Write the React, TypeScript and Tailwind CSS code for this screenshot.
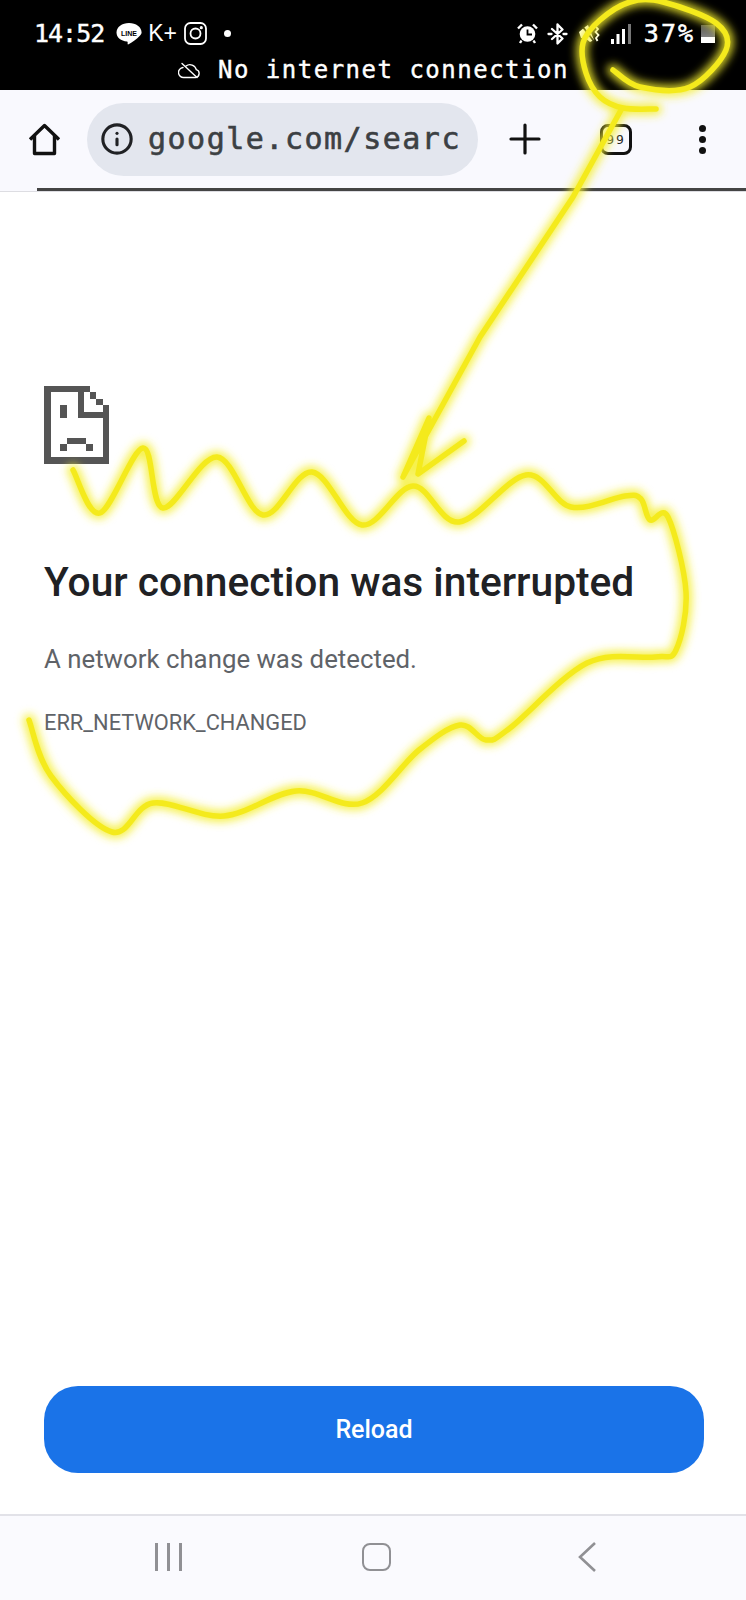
import { Info, Plus } from 'lucide-react';

type Pt = [number, number];

// smooth line through the marker points
function smooth(pts: Pt[]) {
  let d = `M${pts[0][0]} ${pts[0][1]}`;
  for (let i = 0; i < pts.length - 1; i++) {
    const p0 = pts[Math.max(i - 1, 0)];
    const p1 = pts[i];
    const p2 = pts[i + 1];
    const p3 = pts[Math.min(i + 2, pts.length - 1)];
    const c1x = p1[0] + (p2[0] - p0[0]) / 6;
    const c1y = p1[1] + (p2[1] - p0[1]) / 6;
    const c2x = p2[0] - (p3[0] - p1[0]) / 6;
    const c2y = p2[1] - (p3[1] - p1[1]) / 6;
    d += ` C${c1x} ${c1y} ${c2x} ${c2y} ${p2[0]} ${p2[1]}`;
  }
  return d;
}

const wave: Pt[] = [
  [73, 470], [100, 513], [143, 448], [163, 508], [217, 457], [263, 515], [312, 472], [362, 525],
  [413, 486], [459, 522], [526, 475], [571, 507], [625, 496], [641, 499], [650, 520], [668, 517],
  [686, 592], [676, 650], [655, 657], [587, 663], [510, 728], [486, 740], [460, 725], [419, 750],
  [362, 803], [296, 791], [224, 816], [153, 803], [112, 832], [51, 776], [29, 720],
];

const circle: Pt[] = [
  [613, 70], [640, 87], [690, 87], [726, 50], [716, 23], [663, 2], [630, 2], [600, 20],
  [583, 43], [586, 73], [600, 97], [623, 108], [656, 109],
];

const arrow = 'M621 110 L573 197 L480 337 L403 477 L429 418 L418 474 L464 441';

function Marker() {
  const paths = [smooth(wave), smooth(circle), arrow];
  return (
    <svg className="absolute left-0 top-0 pointer-events-none" width="746" height="1600" viewBox="0 0 746 1600" fill="none">
      <defs>
        <filter id="glow" x="-10%" y="-10%" width="120%" height="120%">
          <feGaussianBlur stdDeviation="4" />
        </filter>
      </defs>
      <g filter="url(#glow)" stroke="#f5ee30" strokeOpacity="0.85" strokeWidth="12" strokeLinecap="round" strokeLinejoin="round">
        {paths.map((d, i) => <path key={i} d={d} />)}
      </g>
      <g stroke="#f4ea1c" strokeWidth="5.500" strokeLinecap="round" strokeLinejoin="round">
        {paths.map((d, i) => <path key={i} d={d} />)}
      </g>
    </svg>
  );
}

function LineIcon() {
  return (
    <svg width="26" height="24" viewBox="0 0 26 24" className="ml-[12px]">
      <path d="M13 1C6 1 0.500 5 0.500 10.500c0 5 4.500 8.500 10.500 9 .8.2.8 1 .6 2-.1.8.3 1.200 1 .8 3-1.800 8-4.800 11-8.300 1.500-1.500 2-2.500 2-3.500C25.500 5 20 1 13 1z" fill="#fff" />
      <text x="13" y="13.500" textAnchor="middle" fontSize="7" fontWeight="700" fontFamily="Liberation Sans, sans-serif" fill="#000">LINE</text>
    </svg>
  );
}

function InstaIcon() {
  return (
    <svg width="23" height="23" viewBox="0 0 23 23" fill="none" stroke="#fff" strokeWidth="1.800" className="ml-[7px]">
      <rect x="1" y="1" width="21" height="21" rx="5.500" />
      <circle cx="11.500" cy="11.500" r="5" />
      <circle cx="17.300" cy="5.700" r="0.700" fill="#fff" />
    </svg>
  );
}

function CloudOff() {
  return (
    <svg width="23" height="17" viewBox="0 0 23 17" fill="none" stroke="#fff" strokeWidth="1.400" strokeLinecap="round">
      <path d="M6 15.500h11.500a4 4 0 0 0 .8-7.800A6.500 6.500 0 0 0 8 4M5 5.500a5 5 0 0 0 1 10" />
      <path d="M4 1.500l15 14" />
    </svg>
  );
}

function Alarm() {
  return (
    <svg width="21" height="21" viewBox="0 0 21 21">
      <circle cx="10.500" cy="11" r="7.800" fill="#fff" />
      <path d="M10.500 6.500V11.500H15" stroke="#000" strokeWidth="1.800" fill="none" />
      <path d="M1 5.500L5 1.500M20 5.500L16 1.500M4.500 17.500L3 20M16.500 17.500L18 20" stroke="#fff" strokeWidth="2.400" />
    </svg>
  );
}

function Bluetooth() {
  return (
    <svg width="21" height="22" viewBox="0 0 21 22" fill="none" stroke="#fff" strokeWidth="2.300" strokeLinecap="round" strokeLinejoin="round" className="ml-[9px]">
      <path d="M10.500 1.500v19l5-5L5 6M10.500 1.500l5 5L5 16" />
      <path d="M1.500 11h3M16.500 11h3" />
    </svg>
  );
}

function Mute() {
  return (
    <svg width="22" height="21" viewBox="0 0 22 21" className="ml-[10px]">
      <path d="M1 9l6-5 3-2 6 15-4 2-5-4H3z" fill="#fff" />
      <path d="M3 1.500l13 17" stroke="#000" strokeWidth="1.800" />
      <path d="M17 3l3 3-2.500 3 3 3-2.500 3 1.500 3" stroke="#fff" strokeWidth="1.800" fill="none" />
    </svg>
  );
}

function Signal() {
  return (
    <svg width="20" height="20" viewBox="0 0 20 20" className="ml-[11px]">
      <rect x="0" y="15" width="3" height="5" fill="#fff" />
      <rect x="5.500" y="10" width="3" height="10" fill="#fff" />
      <rect x="11" y="5" width="3" height="15" fill="#fff" />
      <rect x="17" y="0" width="3" height="20" fill="#777" />
    </svg>
  );
}

function Battery() {
  return (
    <div className="ml-[6px] flex h-[18px] w-[14px] flex-col justify-end bg-[#6f6f6f] bg-gradient-to-b from-[#555555] to-[#999999]">
      <div className="h-[6px] bg-white" />
    </div>
  );
}

function SadTab() {
  return (
    <svg width="65" height="79" viewBox="0 0 10 12" fill="#555555" shapeRendering="crispEdges">
      <rect x="0" y="0" width="7" height="1" />
      <rect x="0" y="0" width="1" height="12" />
      <rect x="0" y="11" width="10" height="1" />
      <rect x="9" y="3" width="1" height="9" />
      <rect x="5.200" y="1" width="1" height="4" />
      <rect x="5.200" y="4" width="4" height="1" />
      <rect x="7" y="1" width="1" height="1" />
      <rect x="8" y="2" width="1" height="1" />
      <rect x="2.500" y="3" width="1" height="2" />
      <rect x="3.500" y="8" width="3" height="1" />
      <rect x="2.500" y="9" width="1" height="1" />
      <rect x="6.500" y="9" width="1" height="1" />
    </svg>
  );
}

export default function App() {
  return (
    <div className="relative flex h-[1600px] w-[746px] flex-col overflow-hidden bg-white font-['Roboto',sans-serif]">
      {/* status bar */}
      <div className="h-[90px] shrink-0 bg-black pl-[34px] pr-[31px] pt-[21px] text-white font-['DejaVu_Sans_Mono',monospace]">
        <div className="flex h-[25px] items-center">
          <span className="text-[25px] leading-none tracking-[-1px] [-webkit-text-stroke:0.4px_#fff]">14:52</span>
          <LineIcon />
          <span className="ml-[6px] font-['Liberation_Sans',sans-serif] text-[23px] leading-none">K+</span>
          <InstaIcon />
          <span className="ml-[17px] h-[7px] w-[7px] rounded-full bg-white" />
          <span className="ml-auto flex items-center">
            <Alarm />
            <Bluetooth />
            <Mute />
            <Signal />
            <span className="ml-[13px] text-[25px] leading-none tracking-[2px] [-webkit-text-stroke:0.5px_#fff]">37%</span>
            <Battery />
          </span>
        </div>
        <div className="mt-[12px] flex items-center pl-[144px]">
          <CloudOff />
          <span className="ml-[17px] text-[24px] leading-none tracking-[1.500px] [-webkit-text-stroke:0.4px_#fff]">No internet connection</span>
        </div>
      </div>

      {/* toolbar */}
      <div className="flex h-[98px] shrink-0 items-center bg-[#f9f9fe] pl-[28px]">
        <svg width="33" height="33" viewBox="0 0 33 33" fill="none" stroke="#111" strokeWidth="3.400" strokeLinejoin="round">
          <path d="M2 16.500L16.500 2.500 31 16.500M6.500 13v17.500h20V13" />
        </svg>
        <div className="ml-[26px] flex h-[73px] w-[391px] items-center rounded-full bg-[#e3e6ee] pl-[13px]">
          <Info size={34} strokeWidth={2.200} color="#202124" />
          <span className="ml-[14px] font-['DejaVu_Sans_Mono',monospace] text-[30px] leading-none tracking-[1.500px] text-[#3c4043] [-webkit-text-stroke:0.6px_#3c4043]">google.com/searc</span>
        </div>
        <Plus size={48} strokeWidth={1.600} color="#111" className="ml-[23px]" />
        <div className="ml-[51px] flex h-[31px] w-[32px] items-center justify-center rounded-[8px] border-[3px] border-[#111] font-['DejaVu_Sans_Mono',monospace] text-[13px] leading-none tracking-[2px] text-[#222]">99</div>
        <div className="ml-[67px] flex flex-col gap-[4px]">
          <span className="h-[7px] w-[7px] rounded-full bg-[#111]" />
          <span className="h-[7px] w-[7px] rounded-full bg-[#111]" />
          <span className="h-[7px] w-[7px] rounded-full bg-[#111]" />
        </div>
      </div>

      {/* page load line */}
      <div className="h-[4px] shrink-0 border-b border-[#dddde2] bg-[#f9f9fe]">
        <div className="ml-[37px] h-[3px] bg-[#444444]" />
      </div>

      {/* error page */}
      <div className="flex flex-1 flex-col px-[42px] pt-[193px]">
        <div className="pl-[2px]">
          <SadTab />
        </div>
        <h1 className="ml-[2px] mt-[94px] whitespace-nowrap text-[40.700px] font-medium leading-[48px] text-[#202124]">Your connection was interrupted</h1>
        <p className="ml-[2px] mt-[37px] text-[25.800px] leading-[32px] text-[#5f6368]">A network change was detected.</p>
        <p className="ml-[2px] mt-[34px] text-[21.800px] leading-[28px] text-[#5f6368]">ERR_NETWORK_CHANGED</p>
        <button className="mb-[41px] ml-[2px] mt-auto h-[87px] rounded-[34px] bg-[#1a73e8] text-[25px] font-medium text-white">Reload</button>
      </div>

      {/* nav bar */}
      <div className="flex h-[86px] shrink-0 items-start border-t-2 border-[#e2e2e8] bg-[#fafafe] pt-[27px]">
        <div className="ml-[155px] flex h-[28px] gap-[9.500px]">
          <span className="w-[2.500px] bg-[#909094]" />
          <span className="w-[2.500px] bg-[#909094]" />
          <span className="w-[2.500px] bg-[#909094]" />
        </div>
        <div className="ml-[180px] h-[28px] w-[29px] rounded-[8px] border-[2.500px] border-[#909094]" />
        <svg width="18" height="30" viewBox="0 0 18 30" fill="none" stroke="#909094" strokeWidth="2.600" className="ml-[187px] -mt-[1px]">
          <path d="M17 1L2 15l15 14" />
        </svg>
      </div>

      <Marker />
    </div>
  );
}
